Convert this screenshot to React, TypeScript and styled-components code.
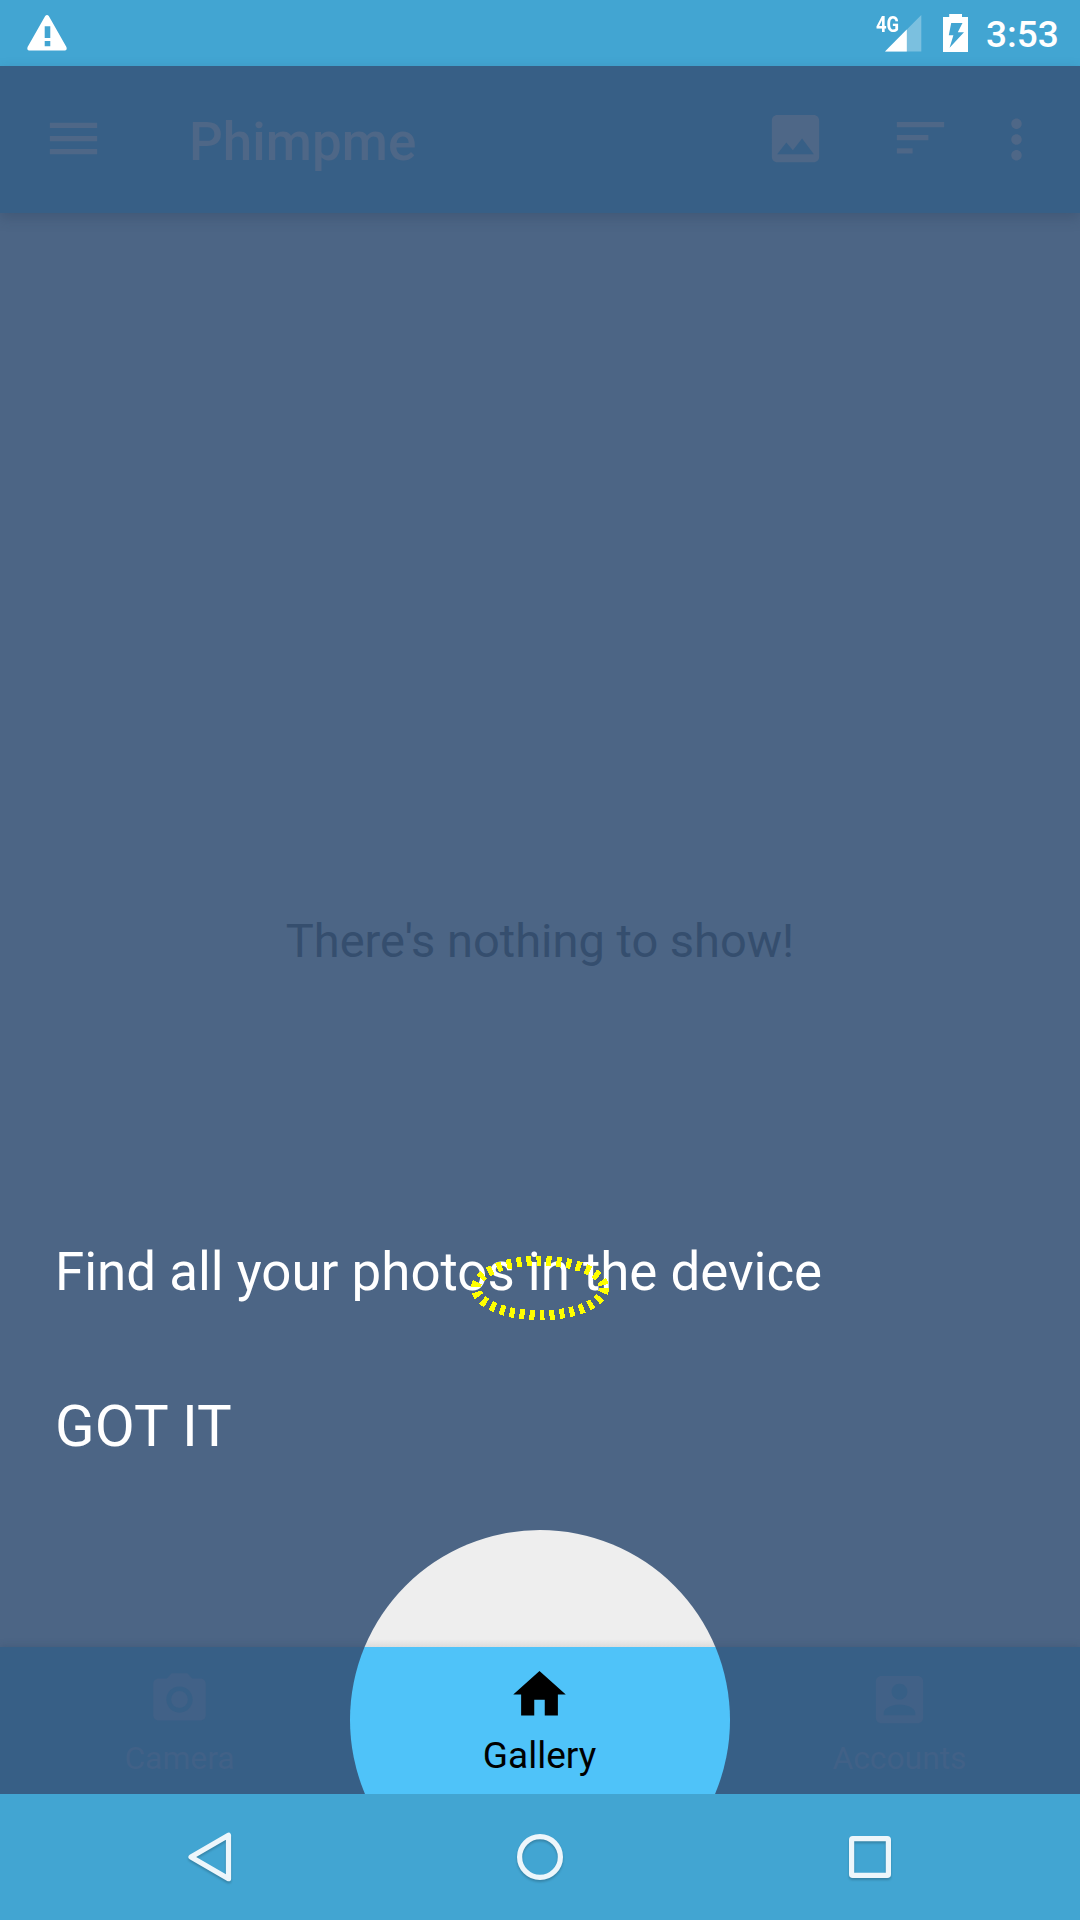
import React from "react";
import styled, { createGlobalStyle } from "styled-components";

const colors = {
  system: "#42a5d2",
  barDim: "#375f86",
  pageDim: "#4c6585",
  inkDim: "#4e6787",
  inkFaint: "#416187",
  textDim: "#354e6e",
  primary: "#4fc3f9",
  page: "#eeeeee",
};

const GlobalStyle = createGlobalStyle`
  * { box-sizing: border-box; }
  body { margin: 0; background: ${colors.pageDim}; }
`;

const Screen = styled.div`
  width: 1080px;
  height: 1920px;
  display: flex;
  flex-direction: column;
  overflow: hidden;
  background: ${colors.pageDim};
  font-family: Roboto, "Liberation Sans", sans-serif;
`;

const StatusBar = styled.header`
  flex: none;
  height: 66px;
  display: flex;
  align-items: flex-start;
  padding: 0 22px 0 27px;
  background: ${colors.system};
  color: #fff;
`;

const StatusIcon = styled.svg<{ $gap?: number }>`
  display: block;
  flex: none;
  margin-top: 14px;
  margin-right: ${(p) => p.$gap ?? 0}px;
`;

const NetworkLabel = styled.span`
  flex: none;
  margin: 11px -14px 0 auto;
  width: 23px;
  font-size: 22.5px;
  line-height: 26px;
  font-weight: 700;
  transform: scaleX(0.82);
  transform-origin: left center;
`;

const Clock = styled.time`
  flex: none;
  width: 72px;
  font-size: 37px;
  line-height: 44px;
  font-weight: 500;
  margin-top: 13px;
  white-space: nowrap;
`;

const Toolbar = styled.div`
  flex: none;
  position: relative;
  height: 147px;
  display: flex;
  align-items: center;
  padding: 0 32px 0 42px;
  background: ${colors.barDim};
  color: ${colors.inkDim};
  box-shadow: 0 5px 12px rgba(40, 58, 82, 0.28);
`;

const Title = styled.h1`
  flex: 1;
  margin: 0 0 0 84px;
  padding-top: 5px;
  font-size: 53px;
  line-height: 62px;
  font-weight: 500;
`;

const Icon = styled.svg<{ $gap?: number; $raise?: number }>`
  display: block;
  flex: none;
  width: 63px;
  height: 63px;
  fill: currentColor;
  margin-right: ${(p) => p.$gap ?? 0}px;
  margin-bottom: ${(p) => p.$raise ?? 0}px;
`;

const Main = styled.main`
  flex: 1;
  display: flex;
  flex-direction: column;
  padding: 700px 0 0 55px;
`;

const EmptyMessage = styled.p`
  margin: 0 0 272px -55px;
  text-align: center;
  font-size: 47px;
  line-height: 56px;
  color: ${colors.textDim};
`;

const Hint = styled.div`
  position: relative;
  display: flex;
  flex-direction: column;
  align-items: flex-start;
  gap: 89px;
  color: #fff;
`;

const HintText = styled.p`
  margin: 0;
  font-size: 52.85px;
  line-height: 62px;
  white-space: nowrap;
`;

const GotIt = styled.button`
  padding: 0;
  border: 0;
  background: none;
  color: inherit;
  font-family: inherit;
  font-size: 58.2px;
  line-height: 68px;
`;

const FocusRing = styled.svg`
  position: absolute;
  left: 415px;
  top: 14px;
`;

const Tabs = styled.nav`
  flex: none;
  position: relative;
  height: 147px;
  display: grid;
  grid-template-columns: repeat(3, 1fr);
  background: ${colors.barDim};
  box-shadow: 0 -1px 7px rgba(40, 58, 82, 0.22);
`;

const Spotlight = styled.div`
  position: absolute;
  left: 350px;
  bottom: 0;
  width: 380px;
  height: 264px;
  clip-path: circle(190px at 190px 190px);
  background: linear-gradient(
    ${colors.page} 109px,
    #dcdcdc 117px,
    ${colors.primary} 117px
  );
`;

const Tab = styled.div<{ $active?: boolean }>`
  position: relative;
  display: flex;
  flex-direction: column;
  align-items: center;
  justify-content: space-between;
  padding: ${(p) => (p.$active ? "16px 1px 18px 0" : "21px 1px 16px 0")};
  color: ${(p) => (p.$active ? "#000" : colors.inkFaint)};
  font-size: ${(p) => (p.$active ? 37 : 31.8)}px;
  line-height: 40px;
`;

const NavigationBar = styled.footer`
  flex: none;
  position: relative;
  height: 126px;
  display: flex;
  justify-content: space-between;
  align-items: center;
  padding: 0 180px;
  background: ${colors.system};
`;

const NavIcon = styled.svg`
  display: block;
  width: 60px;
  height: 60px;
  fill: none;
  stroke: #edf6fb;
  stroke-width: 5.2;
  stroke-linejoin: round;
  filter: drop-shadow(0 2px 1px rgba(0, 0, 0, 0.2));
`;

const tabs = [
  {
    label: "Camera",
    path: (
      <>
        <circle cx="12" cy="12" r="3.2" />
        <path d="M9 2L7.17 4H4c-1.1 0-2 .9-2 2v12c0 1.1.9 2 2 2h16c1.1 0 2-.9 2-2V6c0-1.1-.9-2-2-2h-3.17L15 2H9zm3 15c-2.76 0-5-2.24-5-5s2.24-5 5-5 5 2.24 5 5-2.24 5-5 5z" />
      </>
    ),
  },
  {
    label: "Gallery",
    active: true,
    path: <path d="M10 20v-6h4v6h5v-8h3L12 3 2 12h3v8z" />,
  },
  {
    label: "Accounts",
    path: (
      <path d="M3 5v14c0 1.1.89 2 2 2h14c1.1 0 2-.9 2-2V5c0-1.1-.9-2-2-2H5c-1.11 0-2 .9-2 2zm12 4c0 1.66-1.34 3-3 3s-3-1.34-3-3 1.34-3 3-3 3 1.34 3 3zm-9 8c0-2 4-3.1 6-3.1s6 1.1 6 3.1v1H6v-1z" />
    ),
  },
];

export default function App() {
  return (
    <>
      <GlobalStyle />
      <Screen>
        <StatusBar>
          <StatusIcon width="40" height="38" viewBox="0 0 40 38">
            <path
              fill="#fff"
              fillRule="evenodd"
              d="M18.2 2.1Q20 -.2 21.8 2.1L39.4 33Q40.4 36.4 38 36.4H2Q-.4 36.4.6 33ZM17.7 12.3V24H23.3V12.3ZM17.7 27V32.2H23.3V27Z"
            />
          </StatusIcon>
          <NetworkLabel>4G</NetworkLabel>
          <StatusIcon width="37" height="38" viewBox="0 0 37 38" $gap={21}>
            <path fill="#fff" fillOpacity=".3" d="M0 37.4L36.3 1V37.4Z" />
            <path fill="#fff" d="M0 37.4L21.8 15.5V37.4Z" />
          </StatusIcon>
          <StatusIcon width="25" height="38" viewBox="0 0 25 38" $gap={18}>
            <path
              fill="#fff"
              fillRule="evenodd"
              d="M6.2 0H19V3H25V38H0V3H6.2ZM8.2 9L5.8 21.3H10.4L6.6 33.7L21 18.3H14.8L19.5 9Z"
            />
          </StatusIcon>
          <Clock>3:53</Clock>
        </StatusBar>

        <Toolbar>
          <Icon viewBox="0 0 24 24" $raise={2}>
            <path d="M3 18h18v-2H3v2zm0-5h18v-2H3v2zm0-7v2h18V6H3z" />
          </Icon>
          <Title>Phimpme</Title>
          <Icon viewBox="0 0 24 24" $gap={62} $raise={2}>
            <path d="M21 19V5c0-1.1-.9-2-2-2H5c-1.1 0-2 .9-2 2v14c0 1.1.9 2 2 2h14c1.1 0 2-.9 2-2zM8.5 13.5l2.5 3.01L14.5 12l4.5 6H5l3.5-4.5z" />
          </Icon>
          <Icon viewBox="0 0 24 24" $gap={33} $raise={2}>
            <path d="M3 17.7h6v-2H3v2zM3 5.7v2h18v-2H3zm0 7h12v-2H3v2z" />
          </Icon>
          <Icon viewBox="0 0 24 24">
            <path d="M12 8c1.1 0 2-.9 2-2s-.9-2-2-2-2 .9-2 2 .9 2 2 2zm0 2c-1.1 0-2 .9-2 2s.9 2 2 2 2-.9 2-2-.9-2-2-2zm0 6c-1.1 0-2 .9-2 2s.9 2 2 2 2-.9 2-2-.9-2-2-2z" />
          </Icon>
        </Toolbar>

        <Main>
          <EmptyMessage>There's nothing to show!</EmptyMessage>
          <Hint>
            <HintText>Find all your photos in the device</HintText>
            <GotIt>GOT IT</GotIt>
            <FocusRing width="140" height="66" viewBox="0 0 140 66">
              <ellipse
                cx="70"
                cy="33"
                rx="64"
                ry="27.3"
                fill="none"
                stroke="#ff0"
                strokeWidth="10"
                strokeDasharray="5 5"
                shapeRendering="crispEdges"
              />
            </FocusRing>
          </Hint>
        </Main>

        <Tabs>
          <Spotlight />
          {tabs.map((tab) => (
            <Tab key={tab.label} $active={tab.active}>
              <Icon viewBox="0 0 24 24">{tab.path}</Icon>
              <span>{tab.label}</span>
            </Tab>
          ))}
        </Tabs>

        <NavigationBar>
          <NavIcon viewBox="0 0 60 60">
            <path d="M48.5 8.3V51.7L11 30Z" />
          </NavIcon>
          <NavIcon viewBox="0 0 60 60">
            <circle cx="30" cy="30" r="20.4" />
          </NavIcon>
          <NavIcon viewBox="0 0 60 60">
            <rect x="11.6" y="11.6" width="36.8" height="36.8" rx="1.2" />
          </NavIcon>
        </NavigationBar>
      </Screen>
    </>
  );
}
